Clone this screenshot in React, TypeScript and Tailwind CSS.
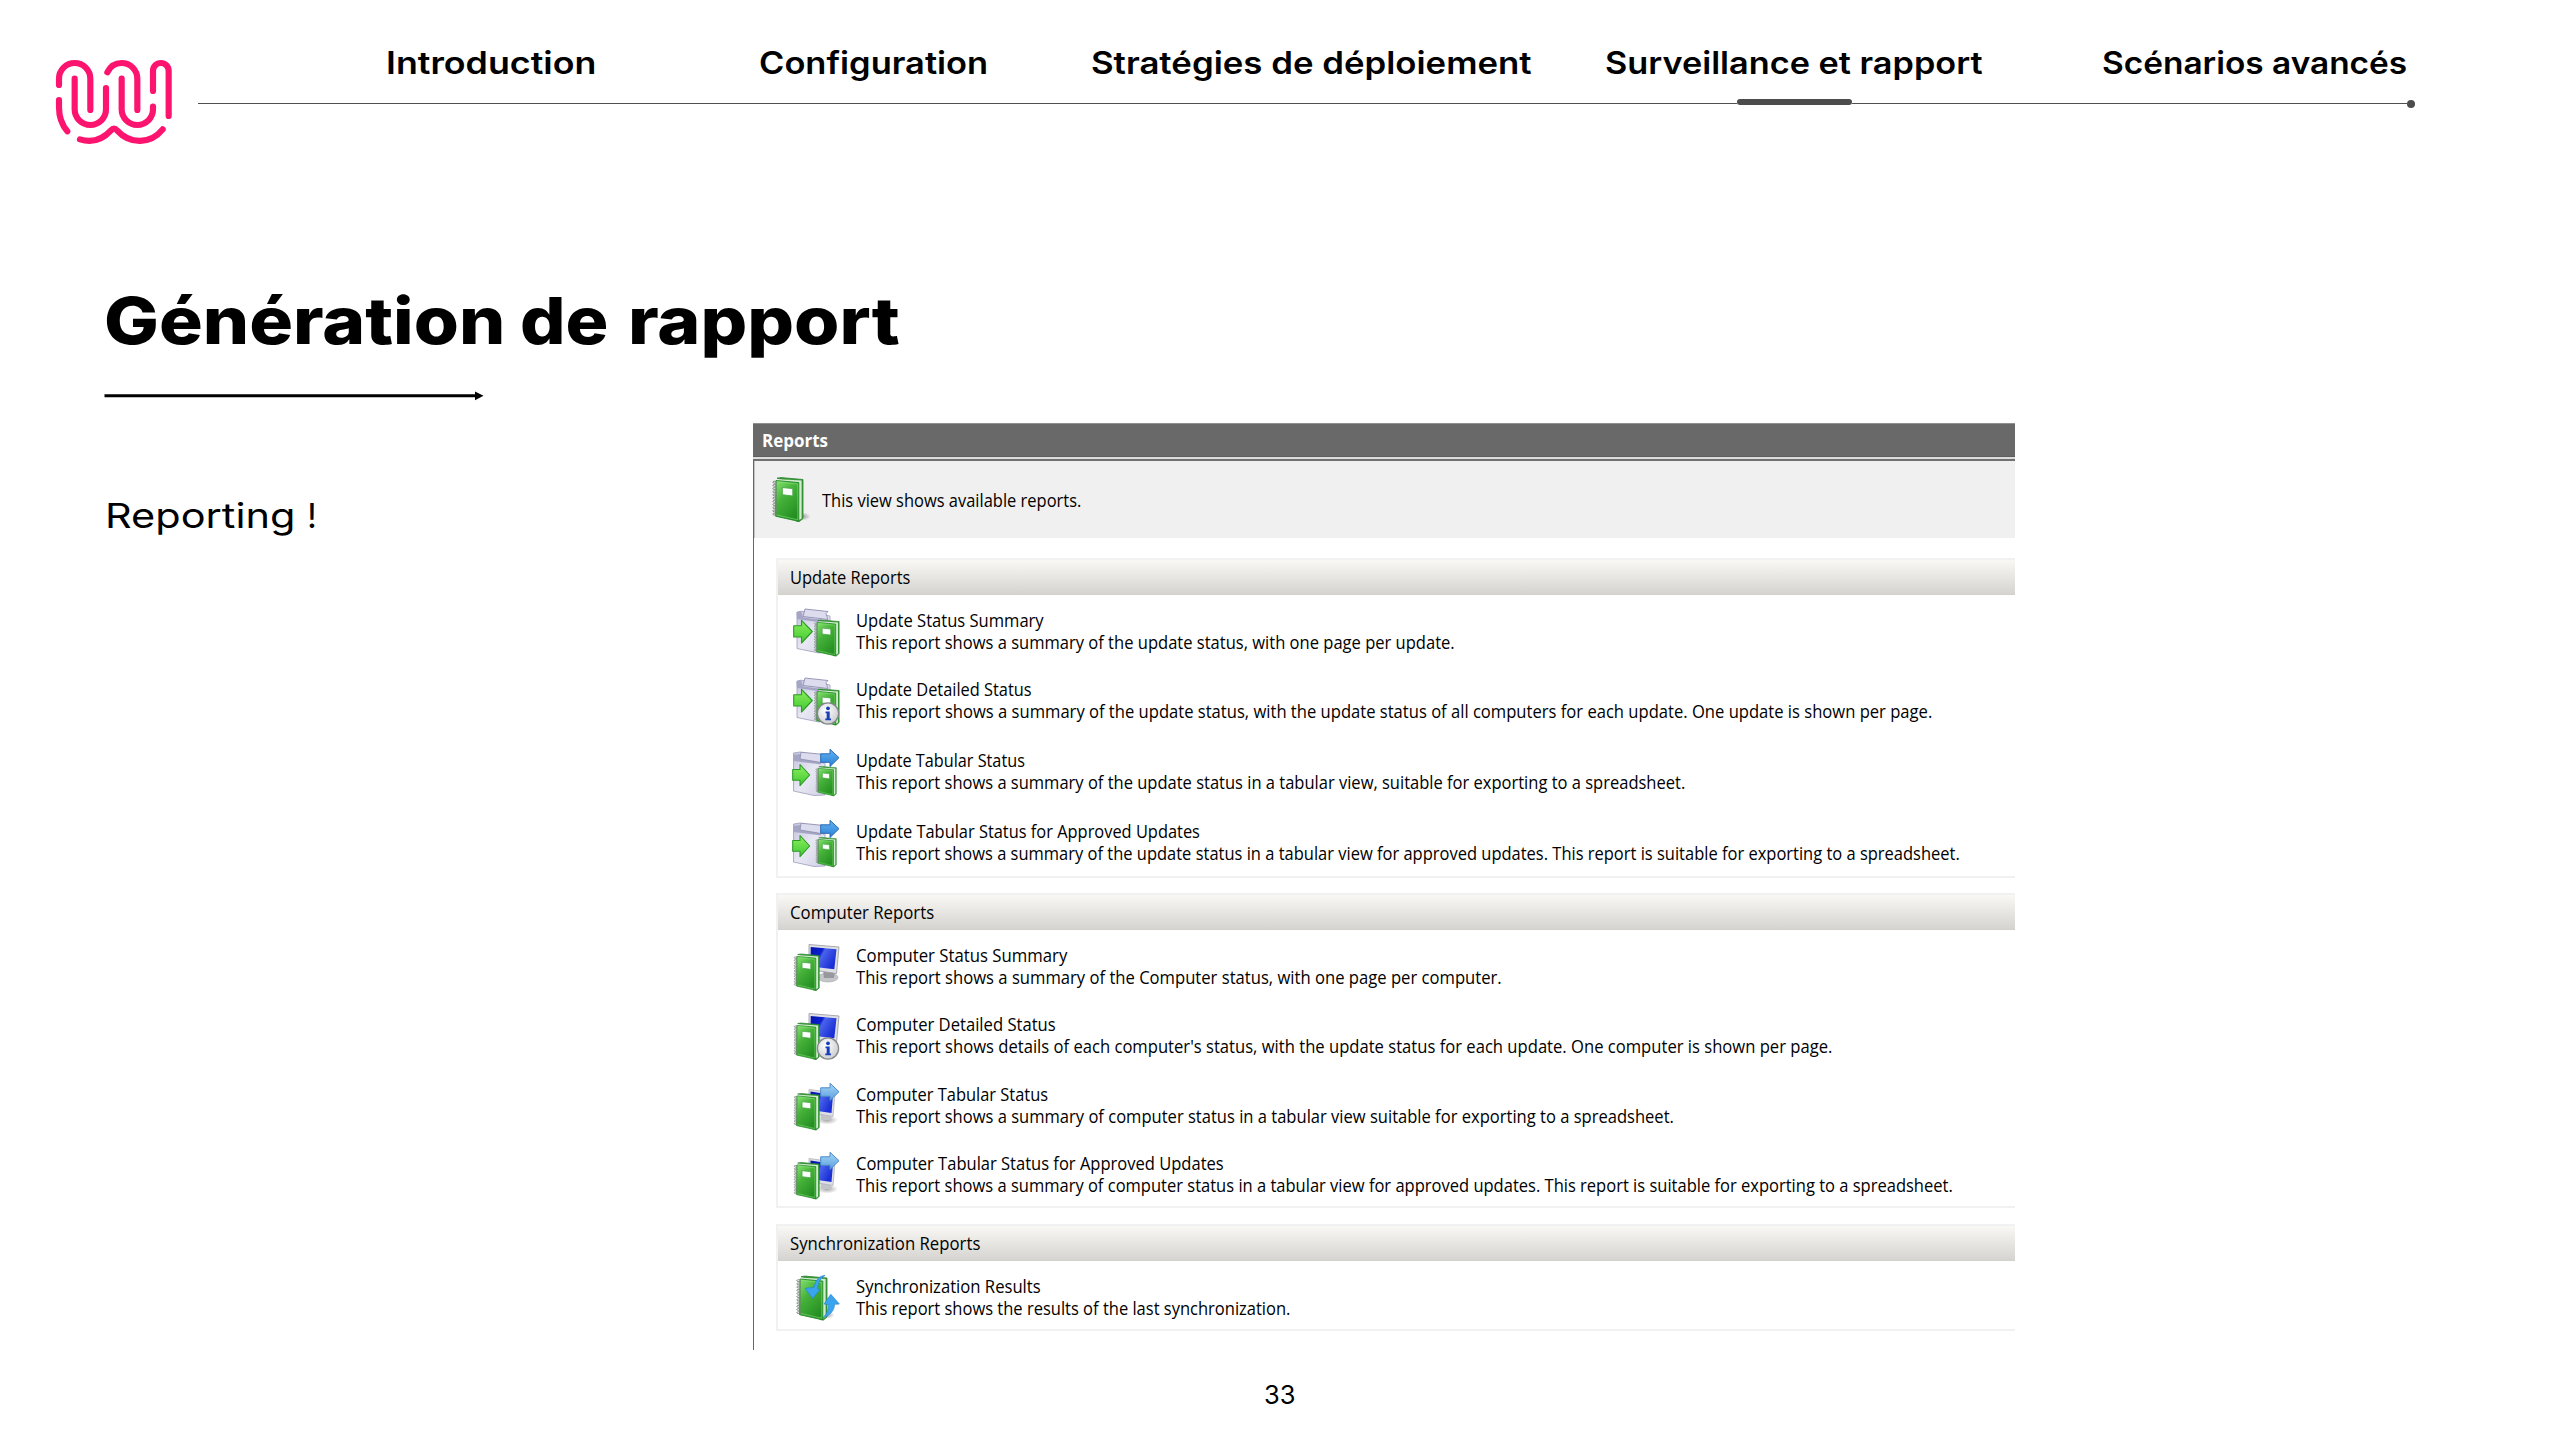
import { useLayoutEffect, useRef, useState, type ReactNode } from 'react';

/** Single line of text whose glyphs are stretched or condensed to fill `width`. */
function Fit({ width, className = '', children }: { width: number; className?: string; children: ReactNode }) {
  const ref = useRef<HTMLSpanElement>(null);
  const [scale, setScale] = useState(1);
  useLayoutEffect(() => {
    if (ref.current) setScale(width / ref.current.offsetWidth);
  }, [width]);
  return (
    <div className={`shrink-0 whitespace-nowrap ${className}`} style={{ width }}>
      <span ref={ref} className="inline-block origin-left" style={{ transform: `scaleX(${scale})` }}>
        {children}
      </span>
    </div>
  );
}

function Logo() {
  return (
    <svg viewBox="0 0 600 420" className="h-[140px] w-[168px] shrink-0" preserveAspectRatio="xMinYMin slice" fill="none" stroke="#fc146f" strokeWidth="18.5" strokeLinecap="round" strokeLinejoin="round">
      <path d="M87 165V146a47 47 0 0 1 94 0V240" />
      <path d="M134 146V238a47 47 0 0 0 94 0V174" />
      <path d="M232 127C240 110 255 99 275 99a47 47 0 0 1 47 47V240" />
      <path d="M275 146V238a47 47 0 0 0 94 0V230" />
      <path d="M369 183V122a23.500 23 0 0 1 47 0V258" />
      <path d="M87 210V232Q87 275 112 304" />
      <path d="M150 328C188 340 218 328 243 301Q252 290 261 301C300 344 362 343 398 298" />
    </svg>
  );
}

function Defs() {
  return (
    <svg className="absolute h-0 w-0">
      <defs>
        <linearGradient id="cover" x1="0" y1="0" x2="0.6" y2="1">
          <stop offset="0" stopColor="#84e46e" />
          <stop offset="0.45" stopColor="#46b23a" />
          <stop offset="1" stopColor="#259022" />
        </linearGradient>
        <linearGradient id="go" x1="0" y1="0" x2="0" y2="1">
          <stop offset="0" stopColor="#8cf05c" />
          <stop offset="1" stopColor="#40c832" />
        </linearGradient>
        <linearGradient id="paper" x1="0" y1="0" x2="1" y2="1">
          <stop offset="0" stopColor="#c3c3de" />
          <stop offset="0.5" stopColor="#e8e8f4" />
          <stop offset="1" stopColor="#cfcfe4" />
        </linearGradient>
        <linearGradient id="screen" x1="0" y1="0" x2="1" y2="0.5">
          <stop offset="0" stopColor="#0713a8" />
          <stop offset="0.42" stopColor="#0a1fd0" />
          <stop offset="0.5" stopColor="#4a63ea" />
          <stop offset="1" stopColor="#1a2fd6" />
        </linearGradient>
        <linearGradient id="blue" x1="0" y1="0" x2="0" y2="1">
          <stop offset="0" stopColor="#62b4f2" />
          <stop offset="1" stopColor="#2a7fd4" />
        </linearGradient>
        <linearGradient id="sky" x1="0" y1="0" x2="0" y2="1">
          <stop offset="0" stopColor="#a6d6f7" />
          <stop offset="1" stopColor="#5a9fdd" />
        </linearGradient>
        <radialGradient id="badge" cx="0.4" cy="0.35" r="0.7">
          <stop offset="0" stopColor="#ffffff" />
          <stop offset="1" stopColor="#c9cbd0" />
        </radialGradient>
        <radialGradient id="shade">
          <stop offset="0" stopColor="#6b6b6b" stopOpacity="0.6" />
          <stop offset="1" stopColor="#6b6b6b" stopOpacity="0" />
        </radialGradient>
      </defs>
    </svg>
  );
}

const RINGS = [5, 8.2, 11.4, 14.6, 17.8, 21, 24.2, 27.4, 30.6, 33.8, 37];

function Book({ transform, label = true, shadow = true }: { transform?: string; label?: boolean; shadow?: boolean }) {
  return (
    <g transform={transform}>
      {shadow && <ellipse cx="31" cy="39.500" rx="7.500" ry="4" fill="url(#shade)" />}
      <path d="M5 1.200L9 0.600L31 2.500V41.500L27.500 44.500L24 44V6Z" fill="#3a9d38" stroke="#2b8030" strokeWidth="0.800" strokeLinejoin="round" />
      <path d="M6.500 2.200L29.600 3.600V41.500L27 43V5.800L5.500 3.800Z" fill="#d3ecd0" />
      <path d="M4 3.500L26.800 5.600V44.400L3.600 39.200Z" fill="url(#cover)" stroke="#268a29" strokeWidth="0.900" strokeLinejoin="round" />
      <path d="M5.300 5L25.800 7V42.800L5 38" fill="none" stroke="#8be37c" strokeWidth="0.800" opacity="0.700" />
      {label && <path d="M10.300 10.500L20.800 11.600V19L10.300 17.700Z" fill="#fbfffb" stroke="#48a545" strokeWidth="0.900" />}
      {RINGS.map((y) => (
        <path key={y} d={`M5 ${y + 0.7}C3 ${y + 1.6} 0.6 ${y + 0.9} 0.8 ${y}C1.200 ${y - 1} 3.200 ${y - 0.9} 4.600 ${y - 0.2}`} fill="none" stroke="#78847a" strokeWidth="1" />
      ))}
    </g>
  );
}

function InfoBadge() {
  return (
    <g>
      <circle cx="36" cy="36.500" r="10.600" fill="url(#badge)" stroke="#85878b" strokeWidth="1.300" />
      <circle cx="36" cy="31.300" r="1.900" fill="#1740b8" />
      <path d="M33.500 34.500H37.700V41.500H39V43.200H33.300V41.500H34.700V36.200H33.500Z" fill="#1740b8" />
    </g>
  );
}

const BLUE_ARROW = 'M28.700 5.800H38V1.300L47 9.700L38 18.500V14.300H28.700Z';

type IconKind = 'update' | 'updateInfo' | 'updateTab' | 'computer' | 'computerInfo' | 'computerTab' | 'sync';

function Icon({ kind }: { kind: IconKind }) {
  const cls = 'h-[49px] w-[49px] shrink-0';
  if (kind === 'update' || kind === 'updateInfo') {
    return (
      <svg viewBox="0 0 49 49" className={cls}>
        <path d="M5 4L5 40.500L27 45L38 43V8L9 3.200Z" fill="url(#paper)" stroke="#9c9cba" strokeWidth="0.800" />
        <path d="M4.500 4.500L9 3.500L11 9.500L32 12V15L5 11Z" fill="#a5a5c6" />
        <path d="M13 1L36 3.500L34 5.500L36 11.500L11 8.500Z" fill="#dcdcee" stroke="#8f8fb0" strokeWidth="0.900" />
        <Book transform="translate(21.700 11.500) scale(0.820)" shadow={false} />
        <path d="M1.700 17.700H9.500V12.300L20.300 23.500L9.500 35V29H1.700Z" fill="url(#go)" stroke="#2d9a27" strokeWidth="1.100" strokeLinejoin="round" />
        {kind === 'updateInfo' && <InfoBadge />}
      </svg>
    );
  }
  if (kind === 'updateTab') {
    return (
      <svg viewBox="0 0 49 49" className={cls}>
        <path d="M1.500 5V43L22 47.500L33 47V10L8 4Z" fill="url(#paper)" stroke="#9c9cba" strokeWidth="0.800" />
        <path d="M1.500 7L8 6L9 11L29 14V16.500L1.500 13Z" fill="#a5a5c6" />
        <path d="M9 4.200L30 6.300L32 15L8 11Z" fill="#dcdcee" stroke="#8f8fb0" strokeWidth="0.900" />
        <Book transform="translate(23.500 18) scale(0.670)" shadow={false} />
        <path d="M0.700 21.500H8V16.500L17.700 27L8 37.700V32.300H0.700Z" fill="url(#go)" stroke="#2d9a27" strokeWidth="1.100" strokeLinejoin="round" />
        <path d={BLUE_ARROW} fill="url(#blue)" stroke="#2a6cb4" strokeWidth="1" strokeLinejoin="round" />
      </svg>
    );
  }
  if (kind === 'computer' || kind === 'computerInfo') {
    return (
      <svg viewBox="0 0 49 49" className={cls}>
        <ellipse cx="36" cy="34.500" rx="10" ry="4.500" fill="#c4c6ca" stroke="#a4a6aa" strokeWidth="0.600" />
        <path d="M31 26L43 28L42 35L32 35Z" fill="#96989d" />
        <path d="M17 1.500L47 4L44.500 30.500L17 26.500Z" fill="#dfe0e5" stroke="#a0a2a8" strokeWidth="0.900" strokeLinejoin="round" />
        <path d="M18.700 4L44.500 6.300L42.300 26.300L18.500 23.500Z" fill="url(#screen)" />
        <Book transform="translate(1.500 10.500) scale(0.830)" shadow={false} />
        {kind === 'computerInfo' && <InfoBadge />}
      </svg>
    );
  }
  if (kind === 'computerTab') {
    return (
      <svg viewBox="0 0 49 49" className={cls}>
        <ellipse cx="35" cy="38" rx="11" ry="4.500" fill="url(#shade)" />
        <path d="M28 31L39 33L40 38L29 38Z" fill="#c2c4c8" />
        <path d="M17 7.500L43 11L41 34.500L17 30.500Z" fill="#dfe0e5" stroke="#b0b2b8" strokeWidth="0.800" strokeLinejoin="round" />
        <path d="M18.500 9.500L41 13L39.500 31L18.500 28Z" fill="url(#screen)" />
        <Book transform="translate(1.500 11) scale(0.830)" shadow={false} />
        <path d={BLUE_ARROW} fill="url(#sky)" stroke="#4c8cc8" strokeWidth="1" strokeLinejoin="round" />
      </svg>
    );
  }
  return (
    <svg viewBox="0 0 49 49" className={cls}>
      <Book transform="translate(4 1.500)" label={false} />
      <path d="M33 1.500C27 2 23.500 6 22 13.500L13 14.300L20.500 24.500L28 15.500L25.500 14.700C26 8.500 28.500 4 33 1.500Z" fill="#3aa5ee" stroke="#2585cf" strokeWidth="0.700" strokeLinejoin="round" />
      <path d="M31 43.500C35 40 36.500 36 36.200 30.500L32 30L38.800 20.300L47.300 30L42.500 30.300C42.500 36 38 42 31 43.500Z" fill="#3aa5ee" stroke="#2585cf" strokeWidth="0.700" strokeLinejoin="round" />
    </svg>
  );
}

type Row = { icon: IconKind; title: string; tw: number; desc: string; dw: number; h: string };

const UPDATE: Row[] = [
  { icon: 'update', title: 'Update Status Summary', tw: 188, desc: 'This report shows a summary of the update status, with one page per update.', dw: 599, h: 'h-[69.500px]' },
  { icon: 'updateInfo', title: 'Update Detailed Status', tw: 176, desc: 'This report shows a summary of the update status, with the update status of all computers for each update. One update is shown per page.', dw: 1076, h: 'h-[71px]' },
  { icon: 'updateTab', title: 'Update Tabular Status', tw: 168.5, desc: 'This report shows a summary of the update status in a tabular view, suitable for exporting to a spreadsheet.', dw: 829, h: 'h-[71px]' },
  { icon: 'updateTab', title: 'Update Tabular Status for Approved Updates', tw: 344, desc: 'This report shows a summary of the update status in a tabular view for approved updates. This report is suitable for exporting to a spreadsheet.', dw: 1104, h: 'h-[49px]' },
];

const COMPUTER: Row[] = [
  { icon: 'computer', title: 'Computer Status Summary', tw: 211, desc: 'This report shows a summary of the Computer status, with one page per computer.', dw: 646, h: 'h-[69px]' },
  { icon: 'computerInfo', title: 'Computer Detailed Status', tw: 199.5, desc: "This report shows details of each computer's status, with the update status for each update. One computer is shown per page.", dw: 976, h: 'h-[69.500px]' },
  { icon: 'computerTab', title: 'Computer Tabular Status', tw: 192, desc: 'This report shows a summary of computer status in a tabular view suitable for exporting to a spreadsheet.', dw: 817.5, h: 'h-[69.500px]' },
  { icon: 'computerTab', title: 'Computer Tabular Status for Approved Updates', tw: 368, desc: 'This report shows a summary of computer status in a tabular view for approved updates. This report is suitable for exporting to a spreadsheet.', dw: 1097, h: 'h-[49px]' },
];

const SYNC: Row[] = [
  { icon: 'sync', title: 'Synchronization Results', tw: 184.5, desc: 'This report shows the results of the last synchronization.', dw: 434.5, h: 'h-[49px]' },
];

function Group({ title, width, rows, className }: { title: string; width: number; rows: Row[]; className: string }) {
  return (
    <section className={`border-y-2 border-l-2 border-[#f1f1f1] ${className}`}>
      <div className="flex h-[35px] items-center border-b border-[#d2d1cc] bg-gradient-to-b from-[#f9f8f5] to-[#d5d4d0] pl-[12px]">
        <Fit width={width} className="pt-px leading-[22.5px]">{title}</Fit>
      </div>
      <div className="pt-[13px]">
        {rows.map((r) => (
          <div key={r.title} className={`flex pl-[14px] ${r.h}`}>
            <Icon kind={r.icon} />
            <div className="pl-[14.500px] pt-px leading-[22px]">
              <Fit width={r.tw}>{r.title}</Fit>
              <Fit width={r.dw}>{r.desc}</Fit>
            </div>
          </div>
        ))}
      </div>
    </section>
  );
}

function ReportsPanel() {
  return (
    <div className="flex h-[927px] w-[1262px] flex-col overflow-hidden font-['Open_Sans','Noto_Sans',sans-serif] text-[18.5px] text-black">
      <div className="flex h-[34px] shrink-0 items-center border-t border-b border-t-[#909090] border-b-[#5e5e5e] bg-[#696969] pl-[9px]">
        <Fit width={66} className="font-bold leading-[22px] text-white">Reports</Fit>
      </div>
      <div className="h-[2px] shrink-0 bg-[#dcdcdc]" />
      <div className="grow border-t-2 border-l border-t-[#707070] border-l-[#666666] bg-white">
        <div className="flex h-[77px] items-center border-l border-[#c4c4c4] bg-[#f0f0f0] pl-[17px]">
          <svg viewBox="0 0 40 46" className="h-[46px] w-[40px] shrink-0">
            <Book />
          </svg>
          <Fit width={259} className="ml-[10px] pt-px leading-[22.5px]">This view shows available reports.</Fit>
        </div>
        <div className="pl-[22px] pt-[19.500px]">
          <Group title="Update Reports" width={120} rows={UPDATE} className="h-[320px]" />
          <Group title="Computer Reports" width={144} rows={COMPUTER} className="mt-[15.500px] h-[315px]" />
          <Group title="Synchronization Reports" width={190} rows={SYNC} className="mt-[15.500px] h-[107px]" />
        </div>
      </div>
    </div>
  );
}

export default function App() {
  return (
    <div className="flex h-[1440px] w-[2560px] flex-col overflow-hidden bg-white font-['Inter',sans-serif] text-black">
      <Defs />
      <header className="flex h-[250px] shrink-0 pl-[30px] pt-[30px]">
        <Logo />
        <div className="w-[2217px] pt-[12px]">
          <nav className="flex h-[57px] pl-[187.500px] text-[31px] font-[560] leading-[41px]">
            <Fit width={210}>Introduction</Fit>
            <Fit width={229} className="ml-[163.500px]">Configuration</Fit>
            <Fit width={441} className="ml-[103px]">Stratégies de déploiement</Fit>
            <Fit width={377} className="ml-[72.500px]">Surveillance et rapport</Fit>
            <Fit width={305} className="ml-[120px]">Scénarios avancés</Fit>
          </nav>
          <div className="flex h-[9px] items-center">
            <div className="h-px w-[1539px] bg-[#505050]" />
            <div className="mb-[3px] h-[6px] w-[115px] rounded-[3px] bg-[#4c4c4c]" />
            <div className="h-px w-[555px] bg-[#505050]" />
            <div className="h-[8px] w-[8px] rounded-full bg-[#4c4c4c]" />
          </div>
        </div>
      </header>

      <main className="grow">
        <div className="pl-[104px] pt-[31px]">
          <h1 className="flex text-[65px] font-extrabold leading-[80px]">
            <Fit width={401}>Génération</Fit>
            <Fit width={89} className="ml-[15px]">de</Fit>
            <Fit width={272} className="ml-[19px]">rapport</Fit>
          </h1>
          <svg viewBox="0 0 380 10" className="mt-[30px] h-[10px] w-[380px]">
            <path d="M0.500 3.200H371V0.500L379.500 4.700L371 9.200V6.200H0.500Z" fill="#000" />
          </svg>
        </div>
        <div className="flex pt-[22px]">
          <div className="flex w-[753px] pl-[105px] pt-[72px] text-[34.5px] leading-[42px]">
            <Fit width={190}>Reporting</Fit>
            <Fit width={10} className="ml-[12px]">!</Fit>
          </div>
          <ReportsPanel />
        </div>
      </main>

      <footer className="flex h-[60px] shrink-0 justify-center text-[25.5px] leading-[30px]">
        <Fit width={32}>33</Fit>
      </footer>
    </div>
  );
}
